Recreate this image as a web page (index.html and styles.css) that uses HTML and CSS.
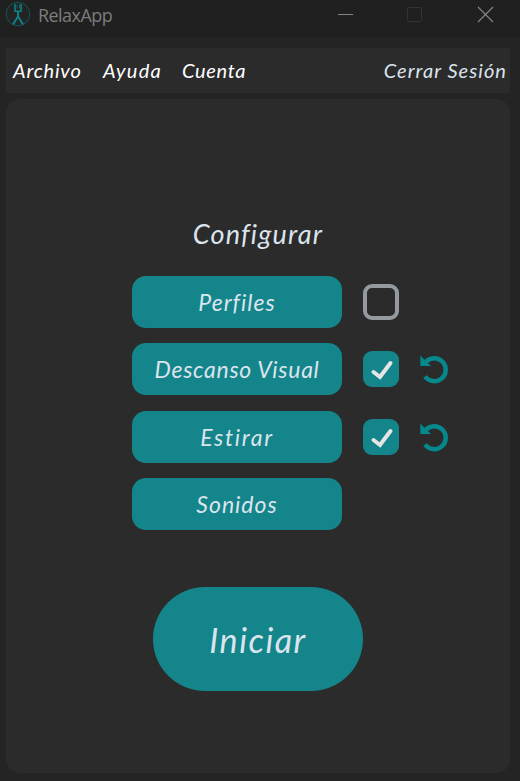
FILE: index.html
```html
<!DOCTYPE html>
<html lang="es">
<head>
<meta charset="utf-8">
<title>RelaxApp</title>
<link rel="stylesheet" href="styles.css">
</head>
<body>
<header class="titlebar">
  <svg class="logo" width="26" height="26" viewBox="0 0 26 26"><circle cx="13" cy="13" r="11.800" fill="#242424" stroke="#12565a"/><g fill="none" stroke="#0b8288" stroke-width="1.500"><path d="M10 3v7.300h6V3"/><path stroke-width="1" opacity=".6" d="M12 3.500v4M14.500 3.500v4"/><path stroke-width="2" d="M13 10v5.500L8 23.500M13 15.500L18 23.500"/></g></svg>
  <span class="app-name">RelaxApp</span>
  <svg class="controls" width="160" height="28" viewBox="0 0 160 28" fill="none"><path d="M0 13.500h15" stroke="#858585"/><rect x="69.500" y="6.500" width="14" height="14" rx="1" stroke="#333"/><path d="M140 6l15 15M155 6l-15 15" stroke="#858585" stroke-width="1.200"/></svg>
</header>
<nav class="menu">
  <span class="item archivo">Archivo</span>
  <span class="item ayuda">Ayuda</span>
  <span class="item cuenta">Cuenta</span>
  <span class="item logout">Cerrar Sesión</span>
</nav>
<main class="panel">
  <h1 class="heading">Configurar</h1>
  <div class="options">
    <button class="option perfiles">Perfiles</button>
    <span class="check"></span>
    <span></span>
    <button class="option descanso">Descanso Visual</button>
    <span class="check on"><svg width="36" height="36" viewBox="0 0 36 36"><path d="M10.500 21l6.500 5L27.500 12" /></svg></span>
    <svg class="reset" width="30" height="30" viewBox="0 0 30 30"><path class="arc" d="M6.500 8.200A11.500 11.500 0 1 1 6 22.500"/><path class="tip" d="M1.300 1.500V12H12L8.700 8.700 5 5.200z"/></svg>
    <button class="option estirar">Estirar</button>
    <span class="check on"><svg width="36" height="36" viewBox="0 0 36 36"><path d="M10.500 21l6.500 5L27.500 12" /></svg></span>
    <svg class="reset" width="30" height="30" viewBox="0 0 30 30"><path class="arc" d="M6.500 8.200A11.500 11.500 0 1 1 6 22.500"/><path class="tip" d="M1.300 1.500V12H12L8.700 8.700 5 5.200z"/></svg>
    <button class="option sonidos">Sonidos</button>
  </div>
  <button class="start">Iniciar</button>
</main>
</body>
</html>
```
FILE: styles.css
```css
* { box-sizing: border-box; }
body {
  margin: 0;
  height: 781px;
  background: #242424;
  color: #dce4ee;
  font-family: "Segoe Print", Lato, sans-serif;
  font-style: italic;
  font-variant-ligatures: none;
  overflow: hidden;
}
button { border: 0; padding: 0; color: inherit; font: inherit; background: #14858a; }
.titlebar {
  display: flex;
  height: 37px;
  padding: 1px 22px 0 5px;
  background: #202020;
  font-style: normal;
}
.app-name {
  margin-left: 7px;
  font: 18px/28px "Open Sans", sans-serif;
  letter-spacing: -0.550px;
  color: #7c7c7c;
}
.controls { display: block; margin-left: auto; }
.menu {
  display: flex;
  height: 45px;
  margin: 11px 10px 0 6px;
  padding: 0 3px 0 7px;
  background: #2b2b2b;
  font-size: 20px;
  line-height: 45px;
  white-space: nowrap;
}
.item { color: #fff; }
.archivo { width: 90px; letter-spacing: .8px; }
.ayuda { width: 79px; letter-spacing: 1.200px; }
.cuenta { letter-spacing: .7px; }
.logout { margin-left: auto; letter-spacing: 1.050px; color: #dce4ee; }
.panel {
  height: 674px;
  margin: 6px 10px 0 6px;
  padding-top: 117px;
  border-radius: 14px;
  background: #2b2b2b;
}
.heading {
  margin: 0;
  font-size: 27px;
  font-weight: 400;
  line-height: 36px;
  letter-spacing: 1.200px;
  text-align: center;
}
.options {
  display: grid;
  grid-template-columns: 210px 36px 30px;
  grid-template-rows: 52px 52px 52px 52px;
  column-gap: 21px;
  row-gap: 15.400px;
  align-items: center;
  margin: 24px 0 0 126px;
}
.option { height: 52px; border-radius: 14px; font-size: 23px; }
.perfiles { letter-spacing: 1px; }
.descanso { letter-spacing: .7px; }
.estirar { letter-spacing: 1.700px; }
.sonidos { letter-spacing: 1px; }
.check { width: 36px; height: 36px; border: 4px solid #949a9f; border-radius: 9px; }
.check.on { border: 0; background: #14858a; }
.check svg { display: block; }
.check path { fill: none; stroke: #e5e5e5; stroke-width: 4; stroke-linecap: round; }
.reset { margin-left: -1px; }
.arc { fill: none; stroke: #04888c; stroke-width: 4.500; }
.tip { fill: #04888c; }
.start {
  display: block;
  width: 210px;
  height: 104px;
  margin: 57px 0 0 147px;
  border-radius: 52px;
  font-size: 34px;
  letter-spacing: 1.500px;
}
```
